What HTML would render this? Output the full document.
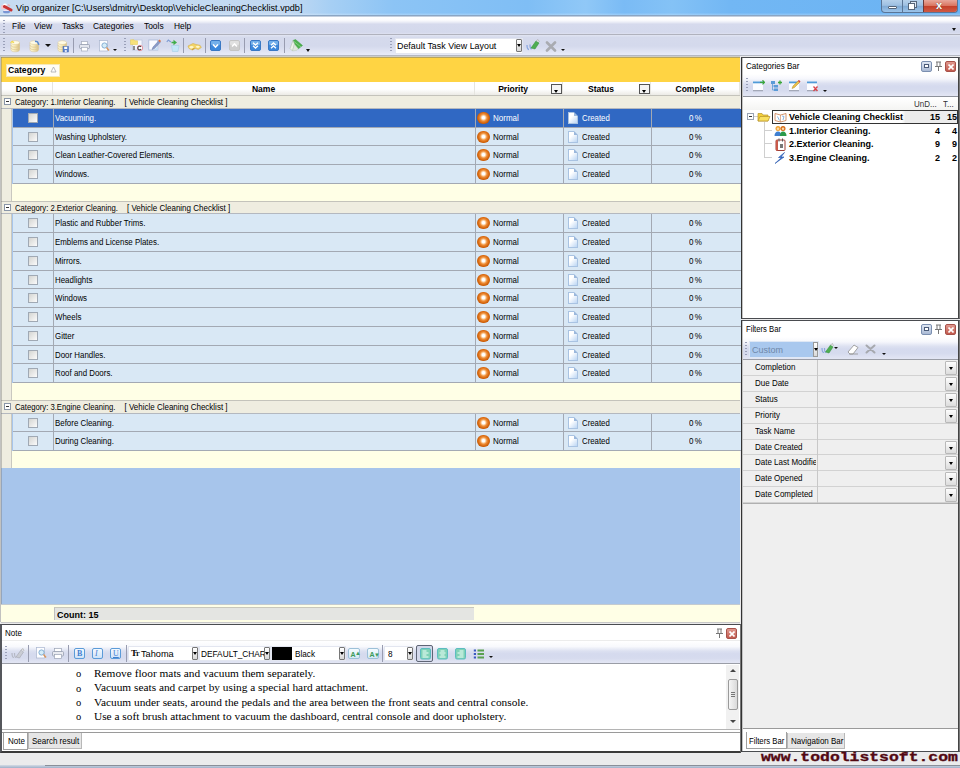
<!DOCTYPE html>
<html><head><meta charset="utf-8"><title>Vip organizer</title>
<style>
*{box-sizing:border-box;margin:0;padding:0}
html,body{width:960px;height:768px;overflow:hidden;background:#ebebec;font-family:"Liberation Sans",sans-serif;font-size:8.3px;color:#000}
.a{position:absolute}
.t{position:absolute;white-space:nowrap;line-height:1}
#title{left:0;top:0;width:960px;height:16px;border-bottom:1px solid #8ba6c4;background:linear-gradient(rgba(255,255,255,0) 0,rgba(255,255,255,0) 85%,rgba(255,255,255,.25) 100%),linear-gradient(90deg,#c6dbf1 0,#c2d9f2 30%,#a6cff4 34.5%,#8cc4f5 41%,#7fbef5 55%,#90c8f7 61%,#7abbf5 65%,#84c2f6 70%,#72b7f4 76%,#6ab3f3 100%)}
#title .t{font-size:9.1px;left:16px;top:3.5px;color:#000}
#menubar{left:0;top:16px;width:960px;height:19px;background:linear-gradient(#fff 0,#fcfcfe 18%,#eceef7 30%,#d6daed 42%,#d4d9ec 90%,#dee1f0 100%);border-bottom:1px solid #b0b2bd;border-top:1px solid #c3cfdf}
#menubar .t{font-size:9px;top:4.6px;transform:scaleX(.933);transform-origin:0 50%}
#toolbar{left:0;top:35px;width:960px;height:21px;background:linear-gradient(#e2e5f2 0,#d5daec 12%,#d4d9ec 55%,#e8ebf8 100%);border-bottom:1px solid #b4b8c2}
.grip{position:absolute;width:2px;background-image:linear-gradient(#9aa0b8 50%,transparent 50%);background-size:2px 3px}
.sep{position:absolute;width:1px;background:#989cb0}
#grid{left:0;top:56px;width:740px;height:566px;background:#a7c5eb;border-left:1px solid #c2c2c0;border-top:1px solid #cfcdc4}
#gpanel{left:1px;top:57px;width:739px;height:25px;background:#ffd443;border-top:1px solid #b9a55c}
#hdr{left:1px;top:82px;width:739px;height:13px;background:linear-gradient(#fff 0,#fff 55%,#ecebe6 100%)}
.hc{position:absolute;top:0;height:13px;border-right:1px solid #e6e5e0;font-weight:bold;font-size:9.2px;text-align:center;line-height:14.5px}
.hs{display:inline-block;transform:scaleX(.93)}
.fb{position:absolute;top:2px;width:11px;height:10px;border:1px solid #555;background:#f4f4f4}
.fb:after{content:"";position:absolute;left:2px;top:4.5px;border:2.5px solid transparent;border-top:3px solid #000;border-bottom:0}
.grow{position:absolute;left:1px;width:739px;height:14px;background:#efede0;border-top:1px solid #c4c3bb;border-bottom:1px solid #b4b8bf;font-size:8px;line-height:13px}
.grow .t{left:13.8px;top:1.5px;font-size:8.95px;transform:scaleX(.86);transform-origin:0 50%}
.pm{position:absolute;left:3px;top:2px;width:7px;height:7px;border:1px solid #8a96a8;background:#fff}
.pm:after{content:"";position:absolute;left:1px;top:2px;width:3px;height:1px;background:#333}
.row{position:absolute;left:12.5px;width:728px;background:#d9e8f5;border-bottom:1px solid #a3a9b3;font-size:9.3px}
.row.sel{background:#3068c3;color:#fff}
.row .c{position:absolute;top:0;bottom:0;border-right:1px solid #a3a9b3}
.row .t{top:5px;transform:scaleX(.86);transform-origin:0 50%}
.foot{position:absolute;left:12px;width:728px;background:#ffffe6}
.ind{position:absolute;left:1px;width:11px;background:#efede0;border-right:1px solid #c9c8c0}
.cb{position:absolute;left:15px;top:3.5px;width:10px;height:10px;border:1px solid #a0a9b4;background:linear-gradient(135deg,#d4d5d2,#fbfbfb);}
.pri{position:absolute;left:1.8px;top:2.8px;width:12.5px;height:12.5px;border-radius:50%;background:radial-gradient(circle at 50% 47%,#fff 0,#fff 14%,#fbd4a8 24%,#ee8f3a 38%,#d9690f 58%,#c05808 72%,#a04806 100%)}
.doc{position:absolute;left:4.5px;top:2.5px;width:10px;height:12px;background:linear-gradient(135deg,#fff 35%,#bcd6f4);border:1px solid #a9c3e2;}
.doc:after{content:"";position:absolute;right:-1px;top:-1px;border:2px solid;border-color:#d9e8f5 #d9e8f5 #9bb8dc #9bb8dc}
.sel .doc:after{border-color:#3068c3 #3068c3 #9bb8dc #9bb8dc}
</style></head><body>
<div id="title" class="a"><span class="t">Vip organizer [C:\Users\dmitry\Desktop\VehicleCleaningChecklist.vpdb]</span></div>
<div id="menubar" class="a">
<div class="grip" style="left:3px;top:3px;height:13px"></div>
<span class="t" style="left:12px">File</span>
<span class="t" style="left:34px">View</span>
<span class="t" style="left:62px">Tasks</span>
<span class="t" style="left:93px">Categories</span>
<span class="t" style="left:144px">Tools</span>
<span class="t" style="left:174px">Help</span>
</div>
<div id="toolbar" class="a"><div class="a" style="left:0;top:-1px">
<div class="grip" style="left:3px;top:4px;height:15px"></div>
<svg class="a" style="left:9px;top:5.5px" width="13" height="13" viewBox="0 0 13 13" ><defs><linearGradient id="dbg" x1="0" x2="1"><stop offset="0" stop-color="#fdf8dc"/><stop offset=".45" stop-color="#f6e9b8"/><stop offset="1" stop-color="#d6bd84"/></linearGradient></defs><path d="M2 2.800v7c0 1.200 1.700 2 4.250 2s4.250-.8 4.250-2v-7z" fill="url(#dbg)" stroke="#d9c48c" stroke-width=".5"/><ellipse cx="6.250" cy="2.600" rx="4.250" ry="1.900" fill="#fffbe6" stroke="#dcc992" stroke-width=".5"/><path d="M2 5.200c0 1.200 1.700 2 4.250 2s4.250-.8 4.250-2M2 7.700c0 1.200 1.700 2 4.250 2s4.250-.8 4.250-2" fill="none" stroke="#dcc58c" stroke-width=".7"/><path d="M1.500 2.500l2-1.500l1.500 2" fill="#f7e26a" stroke="#f0d23a" stroke-width=".8"/></svg>
<svg class="a" style="left:28px;top:5.5px" width="13" height="13" viewBox="0 0 13 13" ><defs><linearGradient id="dbg" x1="0" x2="1"><stop offset="0" stop-color="#fdf8dc"/><stop offset=".45" stop-color="#f6e9b8"/><stop offset="1" stop-color="#d6bd84"/></linearGradient></defs><path d="M2 2.800v7c0 1.200 1.700 2 4.250 2s4.250-.8 4.250-2v-7z" fill="url(#dbg)" stroke="#d9c48c" stroke-width=".5"/><ellipse cx="6.250" cy="2.600" rx="4.250" ry="1.900" fill="#fffbe6" stroke="#dcc992" stroke-width=".5"/><path d="M2 5.200c0 1.200 1.700 2 4.250 2s4.250-.8 4.250-2M2 7.700c0 1.200 1.700 2 4.250 2s4.250-.8 4.250-2" fill="none" stroke="#dcc58c" stroke-width=".7"/><path d="M7 1.300l2.500 .5l1.500 3" fill="none" stroke="#5a8ad0" stroke-width="1.500"/></svg>
<div class="a" style="left:45px;top:10px;width:0;height:0;border-left:3px solid transparent;border-right:3px solid transparent;border-top:3.5px solid #111"></div>
<svg class="a" style="left:56px;top:5.5px" width="13" height="13" viewBox="0 0 13 13" ><defs><linearGradient id="dbg" x1="0" x2="1"><stop offset="0" stop-color="#fdf8dc"/><stop offset=".45" stop-color="#f6e9b8"/><stop offset="1" stop-color="#d6bd84"/></linearGradient></defs><path d="M2 2.800v7c0 1.200 1.700 2 4.250 2s4.250-.8 4.250-2v-7z" fill="url(#dbg)" stroke="#d9c48c" stroke-width=".5"/><ellipse cx="6.250" cy="2.600" rx="4.250" ry="1.900" fill="#fffbe6" stroke="#dcc992" stroke-width=".5"/><path d="M2 5.200c0 1.200 1.700 2 4.250 2s4.250-.8 4.250-2M2 7.700c0 1.200 1.700 2 4.250 2s4.250-.8 4.250-2" fill="none" stroke="#dcc58c" stroke-width=".7"/><rect x="7" y="6.500" width="5.500" height="5.500" fill="#5a80cc" stroke="#3d62aa" stroke-width=".5"/><rect x="8.200" y="6.800" width="3" height="2.200" fill="#fff"/><rect x="8.800" y="10" width="2" height="2" fill="#dfe6f5"/></svg>
<div class="sep" style="left:73px;top:4px;height:15px"></div>
<svg class="a" style="left:79px;top:7px" width="11" height="11" viewBox="0 0 11 11" ><rect x="2.500" y=".5" width="6" height="3.500" fill="#fff" stroke="#a4acbc" stroke-width=".7"/><rect x=".5" y="3.500" width="10" height="4" rx="1" fill="#e3e6ee" stroke="#8d95a8" stroke-width=".7"/><rect x="2.500" y="6.500" width="6" height="3.500" fill="#fff" stroke="#a4acbc" stroke-width=".7"/></svg>
<svg class="a" style="left:97.5px;top:6px" width="12" height="12" viewBox="0 0 12 12" ><rect x="1.500" y=".5" width="8" height="10.500" fill="#fdfdff" stroke="#a9b6cf" stroke-width=".7"/><circle cx="6.500" cy="5.500" r="2.600" fill="#d5ecf8" stroke="#7ba7cf" stroke-width=".9"/><path d="M8.500 7.500l2.500 3" stroke="#d9955a" stroke-width="1.400"/></svg>
<div class="a" style="left:113px;top:15px;width:0;height:0;border-left:2px solid transparent;border-right:2px solid transparent;border-top:2.5px solid #111"></div>
<div class="grip" style="left:124px;top:4px;height:15px"></div>
<svg class="a" style="left:130px;top:5px" width="14" height="13" viewBox="0 0 14 13" ><rect x="2.500" y="1" width="9.500" height="10" fill="#f6f8fd" stroke="#b9c4da" stroke-width=".7"/><path d="M.5 .8h3.500l.8 1h2.700v3.700h-7z" fill="#f7e27a" stroke="#e4c84a" stroke-width=".5"/><circle cx="10" cy="9" r="2.700" fill="#fff" stroke="#e48a96" stroke-width=".9"/><path d="M4 7v4" stroke="#555" stroke-width="1.300"/><path d="M11 7.800a1.800 1.800 0 1 0 0 2.400" fill="none" stroke="#444" stroke-width="1.100"/></svg>
<svg class="a" style="left:148px;top:5px" width="14" height="13" viewBox="0 0 14 13" ><rect x=".8" y="1" width="9" height="10" fill="#fafbff" stroke="#a9b8d6" stroke-width=".8"/><path d="M6 11l3.800 0l0-4z" fill="#c4dcf4"/><path d="M4 10.500l1-2.500l6-6.500l1.500 1.500l-6 6.500z" fill="#8a9cc8" stroke="#6a7aa8" stroke-width=".5"/><path d="M10.300 1.800l1.200-1.300l1.500 1.500l-1.200 1.300z" fill="#e4703a"/></svg>
<svg class="a" style="left:166px;top:5px" width="14" height="14" viewBox="0 0 14 14" ><path d="M5.500 6.500h7.500l-1 6h-5.500z" fill="#c4e6f8" stroke="#a4cfe8" stroke-width=".6"/><path d="M.8 3l1.500-2l2.500 2" fill="none" stroke="#7f9cd4" stroke-width="1.200"/><path d="M7.500 .8l3.500 2.700l-3.500 2.700z" fill="#3fae49"/><path d="M5.500 3.500h3" stroke="#3fae49" stroke-width="1.500"/></svg>
<div class="sep" style="left:183px;top:4px;height:15px"></div>
<svg class="a" style="left:187px;top:8px" width="15" height="9" viewBox="0 0 15 9" ><path d="M1 4l5-2.500l3 1l4 .8l1.300 2.200l-3 2l-3-1l-3 1.500l-3.300-1.500z" fill="#f2d468" stroke="#d4ac48" stroke-width=".6"/><ellipse cx="4.500" cy="5.200" rx="2.200" ry="1.200" fill="#fff6c8"/><ellipse cx="10.800" cy="4.800" rx="1.900" ry="1.100" fill="#fff6c8"/><path d="M5 7.500l2.500-1.200" stroke="#b8862a" stroke-width=".8"/></svg>
<div class="sep" style="left:205px;top:4px;height:15px"></div>
<svg class="a" style="left:210px;top:6px" width="11" height="11" viewBox="0 0 11 11" ><rect x=".5" y=".5" width="10" height="10" rx="1.500" fill="#3c88dc" stroke="#3a78c4"/><rect x="1" y="1" width="9" height="4" rx="1" fill="#9accf4" opacity=".6"/><path d="M3 4.500l2.500 2.500l2.500-2.500" fill="none" stroke="#fff" stroke-width="1.600"/></svg>
<svg class="a" style="left:229px;top:6px" width="11" height="11" viewBox="0 0 11 11" ><rect x=".5" y=".5" width="10" height="10" rx="1.500" fill="#cdcdcd" stroke="#c4c4c4"/><rect x="1" y="1" width="9" height="4" rx="1" fill="#ececec" opacity=".6"/><path d="M3 6.500l2.500-2.500l2.500 2.500" fill="none" stroke="#fff" stroke-width="1.600"/></svg>
<div class="sep" style="left:244px;top:4px;height:15px"></div>
<svg class="a" style="left:250px;top:6px" width="11" height="11" viewBox="0 0 11 11" ><rect x=".5" y=".5" width="10" height="10" rx="1.500" fill="#3c88dc" stroke="#3a78c4"/><rect x="1" y="1" width="9" height="4" rx="1" fill="#9accf4" opacity=".6"/><path d="M3 2.800l2.500 2.300l2.500-2.300M3 5.800l2.500 2.300l2.500-2.300" fill="none" stroke="#fff" stroke-width="1.300"/></svg>
<svg class="a" style="left:268px;top:6px" width="11" height="11" viewBox="0 0 11 11" ><rect x=".5" y=".5" width="10" height="10" rx="1.500" fill="#3c88dc" stroke="#3a78c4"/><rect x="1" y="1" width="9" height="4" rx="1" fill="#9accf4" opacity=".6"/><path d="M3 5.200l2.500-2.300l2.500 2.300M3 8.200l2.500-2.300l2.500 2.300" fill="none" stroke="#fff" stroke-width="1.300"/></svg>
<div class="sep" style="left:284px;top:4px;height:15px"></div>
<svg class="a" style="left:289px;top:5px" width="14" height="14" viewBox="0 0 14 14" ><path d="M4 1.500l2.500-1l7 6l-4.500 3.500l-4-5z" fill="#4cb04c" stroke="#3a9a40" stroke-width=".5"/><path d="M4 1.500l-3 8l2.500 2.500l2-7z" fill="#eef2ea" stroke="#a9b8a6" stroke-width=".5"/><path d="M3.500 12l4.500-.8l1.200-1.400l-3.800-4.800z" fill="#dfe8dc" stroke="#b4c2b0" stroke-width=".4"/><path d="M5 2.500l7 5.500" stroke="#8fd48c" stroke-width=".8"/></svg>
<div class="a" style="left:306px;top:15px;width:0;height:0;border-left:2.5px solid transparent;border-right:2.5px solid transparent;border-top:3px solid #111"></div>
<div class="grip" style="left:390px;top:4px;height:15px"></div>
<div class="a" style="left:395px;top:3.500px;width:128px;height:16px;background:#fff;border:1px solid #e3e6f0"><span class="t" style="left:1px;top:3.500px;font-size:8.900px">Default Task View Layout</span><div class="a" style="right:0;top:0;width:6px;height:13px;background:linear-gradient(#fff,#d8d8d8);border:1px solid #777;border-radius:1px"></div><div class="a" style="right:1px;top:5px;border:2px solid transparent;border-top:3px solid #000;border-bottom:0"></div></div>
<svg class="a" style="left:526px;top:5px" width="15" height="13" viewBox="0 0 15 13" ><path d="M1 6c0 3 1 4.500 2 4.500M4 5.500c0 3 .5 4.500 1.500 4.500" fill="none" stroke="#8aa6e0" stroke-width="1.300"/><path d="M5 9l5-7l3 2l-4 6z" fill="#4fae52" stroke="#2f8c38" stroke-width=".5"/><path d="M10 2l2-1.500l1.500 2.500" fill="#e8e8e8" stroke="#999" stroke-width=".5"/></svg>
<svg class="a" style="left:545px;top:7px" width="12" height="11" viewBox="0 0 12 11" ><path d="M2 1.500l8 8M10 1.500l-8 8" stroke="#a9abb1" stroke-width="2.600" stroke-linecap="round"/></svg>
<div class="a" style="left:561px;top:15px;width:0;height:0;border-left:2px solid transparent;border-right:2px solid transparent;border-top:2.5px solid #111"></div>
<div class="a" style="left:952px;top:-6px;width:0;height:0;border-left:2.5px solid transparent;border-right:2.5px solid transparent;border-top:3px solid #111"></div>
</div></div>
<div id="grid" class="a"></div><div id="gpanel" class="a"></div>
<div id="hdr" class="a">
<div class="hc" style="left:0px;width:52px"><span class="hs">Done</span></div>
<div class="hc" style="left:52px;width:422px"><span class="hs">Name</span></div>
<div class="hc" style="left:474px;width:88px;padding-right:11px"><span class="hs">Priority</span><span class="fb" style="right:0px"></span></div>
<div class="hc" style="left:562px;width:88px;padding-right:11px"><span class="hs">Status</span><span class="fb" style="right:0px"></span></div>
<div class="hc" style="left:650px;width:89px"><span class="hs">Complete</span></div>
</div>
<div class="grow" style="top:95px;height:14px"><span class="pm"></span><span class="t">Category: 1.Interior Cleaning.<span style="margin-left:10.500px;font-size:9.300px">[ Vehicle Cleaning Checklist ]</span></span></div>
<div class="row sel" style="top:109px;height:19px"><div class="c" style="left:0;width:41px"><span class="cb"></span></div><div class="c" style="left:41px;width:422px"><span class="t" style="left:1.500px;font-size:9.200px">Vacuuming.</span></div><div class="c" style="left:463px;width:88px"><span class="pri"></span><span class="t" style="left:17.700px">Normal</span></div><div class="c" style="left:551px;width:88px"><span class="doc"></span><span class="t" style="left:18.500px;font-size:9.100px">Created</span></div><div class="c" style="left:639px;width:89px;border-right:0"><span class="t" style="left:37.500px;word-spacing:-1px">0 %</span></div></div>
<div class="row" style="top:128px;height:18px"><div class="c" style="left:0;width:41px"><span class="cb"></span></div><div class="c" style="left:41px;width:422px"><span class="t" style="left:1.500px;font-size:9.200px">Washing Upholstery.</span></div><div class="c" style="left:463px;width:88px"><span class="pri"></span><span class="t" style="left:17.700px">Normal</span></div><div class="c" style="left:551px;width:88px"><span class="doc"></span><span class="t" style="left:18.500px;font-size:9.100px">Created</span></div><div class="c" style="left:639px;width:89px;border-right:0"><span class="t" style="left:37.500px;word-spacing:-1px">0 %</span></div></div>
<div class="row" style="top:146px;height:19px"><div class="c" style="left:0;width:41px"><span class="cb"></span></div><div class="c" style="left:41px;width:422px"><span class="t" style="left:1.500px;font-size:9.200px">Clean Leather-Covered Elements.</span></div><div class="c" style="left:463px;width:88px"><span class="pri"></span><span class="t" style="left:17.700px">Normal</span></div><div class="c" style="left:551px;width:88px"><span class="doc"></span><span class="t" style="left:18.500px;font-size:9.100px">Created</span></div><div class="c" style="left:639px;width:89px;border-right:0"><span class="t" style="left:37.500px;word-spacing:-1px">0 %</span></div></div>
<div class="row" style="top:165px;height:19px"><div class="c" style="left:0;width:41px"><span class="cb"></span></div><div class="c" style="left:41px;width:422px"><span class="t" style="left:1.500px;font-size:9.200px">Windows.</span></div><div class="c" style="left:463px;width:88px"><span class="pri"></span><span class="t" style="left:17.700px">Normal</span></div><div class="c" style="left:551px;width:88px"><span class="doc"></span><span class="t" style="left:18.500px;font-size:9.100px">Created</span></div><div class="c" style="left:639px;width:89px;border-right:0"><span class="t" style="left:37.500px;word-spacing:-1px">0 %</span></div></div>
<div class="foot" style="top:184px;height:17px"></div>
<div class="ind" style="top:109px;height:92px"></div>
<div class="grow" style="top:201px;height:13px"><span class="pm"></span><span class="t">Category: 2.Exterior Cleaning.<span style="margin-left:10.500px;font-size:9.300px">[ Vehicle Cleaning Checklist ]</span></span></div>
<div class="row" style="top:214px;height:19px"><div class="c" style="left:0;width:41px"><span class="cb"></span></div><div class="c" style="left:41px;width:422px"><span class="t" style="left:1.500px;font-size:9.200px">Plastic and Rubber Trims.</span></div><div class="c" style="left:463px;width:88px"><span class="pri"></span><span class="t" style="left:17.700px">Normal</span></div><div class="c" style="left:551px;width:88px"><span class="doc"></span><span class="t" style="left:18.500px;font-size:9.100px">Created</span></div><div class="c" style="left:639px;width:89px;border-right:0"><span class="t" style="left:37.500px;word-spacing:-1px">0 %</span></div></div>
<div class="row" style="top:233px;height:19px"><div class="c" style="left:0;width:41px"><span class="cb"></span></div><div class="c" style="left:41px;width:422px"><span class="t" style="left:1.500px;font-size:9.200px">Emblems and License Plates.</span></div><div class="c" style="left:463px;width:88px"><span class="pri"></span><span class="t" style="left:17.700px">Normal</span></div><div class="c" style="left:551px;width:88px"><span class="doc"></span><span class="t" style="left:18.500px;font-size:9.100px">Created</span></div><div class="c" style="left:639px;width:89px;border-right:0"><span class="t" style="left:37.500px;word-spacing:-1px">0 %</span></div></div>
<div class="row" style="top:252px;height:19px"><div class="c" style="left:0;width:41px"><span class="cb"></span></div><div class="c" style="left:41px;width:422px"><span class="t" style="left:1.500px;font-size:9.200px">Mirrors.</span></div><div class="c" style="left:463px;width:88px"><span class="pri"></span><span class="t" style="left:17.700px">Normal</span></div><div class="c" style="left:551px;width:88px"><span class="doc"></span><span class="t" style="left:18.500px;font-size:9.100px">Created</span></div><div class="c" style="left:639px;width:89px;border-right:0"><span class="t" style="left:37.500px;word-spacing:-1px">0 %</span></div></div>
<div class="row" style="top:271px;height:18px"><div class="c" style="left:0;width:41px"><span class="cb"></span></div><div class="c" style="left:41px;width:422px"><span class="t" style="left:1.500px;font-size:9.200px">Headlights</span></div><div class="c" style="left:463px;width:88px"><span class="pri"></span><span class="t" style="left:17.700px">Normal</span></div><div class="c" style="left:551px;width:88px"><span class="doc"></span><span class="t" style="left:18.500px;font-size:9.100px">Created</span></div><div class="c" style="left:639px;width:89px;border-right:0"><span class="t" style="left:37.500px;word-spacing:-1px">0 %</span></div></div>
<div class="row" style="top:289px;height:19px"><div class="c" style="left:0;width:41px"><span class="cb"></span></div><div class="c" style="left:41px;width:422px"><span class="t" style="left:1.500px;font-size:9.200px">Windows</span></div><div class="c" style="left:463px;width:88px"><span class="pri"></span><span class="t" style="left:17.700px">Normal</span></div><div class="c" style="left:551px;width:88px"><span class="doc"></span><span class="t" style="left:18.500px;font-size:9.100px">Created</span></div><div class="c" style="left:639px;width:89px;border-right:0"><span class="t" style="left:37.500px;word-spacing:-1px">0 %</span></div></div>
<div class="row" style="top:308px;height:19px"><div class="c" style="left:0;width:41px"><span class="cb"></span></div><div class="c" style="left:41px;width:422px"><span class="t" style="left:1.500px;font-size:9.200px">Wheels</span></div><div class="c" style="left:463px;width:88px"><span class="pri"></span><span class="t" style="left:17.700px">Normal</span></div><div class="c" style="left:551px;width:88px"><span class="doc"></span><span class="t" style="left:18.500px;font-size:9.100px">Created</span></div><div class="c" style="left:639px;width:89px;border-right:0"><span class="t" style="left:37.500px;word-spacing:-1px">0 %</span></div></div>
<div class="row" style="top:327px;height:19px"><div class="c" style="left:0;width:41px"><span class="cb"></span></div><div class="c" style="left:41px;width:422px"><span class="t" style="left:1.500px;font-size:9.200px">Gitter</span></div><div class="c" style="left:463px;width:88px"><span class="pri"></span><span class="t" style="left:17.700px">Normal</span></div><div class="c" style="left:551px;width:88px"><span class="doc"></span><span class="t" style="left:18.500px;font-size:9.100px">Created</span></div><div class="c" style="left:639px;width:89px;border-right:0"><span class="t" style="left:37.500px;word-spacing:-1px">0 %</span></div></div>
<div class="row" style="top:346px;height:18px"><div class="c" style="left:0;width:41px"><span class="cb"></span></div><div class="c" style="left:41px;width:422px"><span class="t" style="left:1.500px;font-size:9.200px">Door Handles.</span></div><div class="c" style="left:463px;width:88px"><span class="pri"></span><span class="t" style="left:17.700px">Normal</span></div><div class="c" style="left:551px;width:88px"><span class="doc"></span><span class="t" style="left:18.500px;font-size:9.100px">Created</span></div><div class="c" style="left:639px;width:89px;border-right:0"><span class="t" style="left:37.500px;word-spacing:-1px">0 %</span></div></div>
<div class="row" style="top:364px;height:19px"><div class="c" style="left:0;width:41px"><span class="cb"></span></div><div class="c" style="left:41px;width:422px"><span class="t" style="left:1.500px;font-size:9.200px">Roof and Doors.</span></div><div class="c" style="left:463px;width:88px"><span class="pri"></span><span class="t" style="left:17.700px">Normal</span></div><div class="c" style="left:551px;width:88px"><span class="doc"></span><span class="t" style="left:18.500px;font-size:9.100px">Created</span></div><div class="c" style="left:639px;width:89px;border-right:0"><span class="t" style="left:37.500px;word-spacing:-1px">0 %</span></div></div>
<div class="foot" style="top:383px;height:17px"></div>
<div class="ind" style="top:214px;height:186px"></div>
<div class="grow" style="top:400px;height:14px"><span class="pm"></span><span class="t">Category: 3.Engine Cleaning.<span style="margin-left:10.500px;font-size:9.300px">[ Vehicle Cleaning Checklist ]</span></span></div>
<div class="row" style="top:414px;height:18px"><div class="c" style="left:0;width:41px"><span class="cb"></span></div><div class="c" style="left:41px;width:422px"><span class="t" style="left:1.500px;font-size:9.200px">Before Cleaning.</span></div><div class="c" style="left:463px;width:88px"><span class="pri"></span><span class="t" style="left:17.700px">Normal</span></div><div class="c" style="left:551px;width:88px"><span class="doc"></span><span class="t" style="left:18.500px;font-size:9.100px">Created</span></div><div class="c" style="left:639px;width:89px;border-right:0"><span class="t" style="left:37.500px;word-spacing:-1px">0 %</span></div></div>
<div class="row" style="top:432px;height:19px"><div class="c" style="left:0;width:41px"><span class="cb"></span></div><div class="c" style="left:41px;width:422px"><span class="t" style="left:1.500px;font-size:9.200px">During Cleaning.</span></div><div class="c" style="left:463px;width:88px"><span class="pri"></span><span class="t" style="left:17.700px">Normal</span></div><div class="c" style="left:551px;width:88px"><span class="doc"></span><span class="t" style="left:18.500px;font-size:9.100px">Created</span></div><div class="c" style="left:639px;width:89px;border-right:0"><span class="t" style="left:37.500px;word-spacing:-1px">0 %</span></div></div>
<div class="foot" style="top:451px;height:17px"></div>
<div class="ind" style="top:414px;height:54px"></div>
<div class="a" style="left:1px;top:57px;width:1px;height:566px;background:rgba(120,120,120,.4)"></div>
<div class="a" style="left:1px;top:604px;width:739px;height:19px;background:#ffffe6;border-top:1px solid #c4cbd0;border-bottom:1px solid #c8c8c8"></div>
<div class="a" style="left:54px;top:607px;width:420px;height:13px;background:#e4e5e2;border-left:1px solid #c0c0c0;border-top:1px solid #c9c8bc"><span class="t" style="left:2px;top:1.500px;font-weight:bold;font-size:9.7px;transform:scaleX(.93);transform-origin:0 50%">Count: 15</span></div>
<svg class="a" style="left:0px;top:2px" width="13" height="12" viewBox="0 0 13 12" ><ellipse cx="6.500" cy="9.800" rx="3.500" ry="1.500" fill="#7a96d4"/><path d="M1 3.500l4-1.500l3 2l-2 3l-4.500 .5z" fill="#f6c4cc"/><ellipse cx="5" cy="2.800" rx="1.800" ry="1.200" fill="#fff"/><path d="M8 2.500l2 1.500" stroke="#eeb0b0" stroke-width="1.500"/><path d="M4.500 4.500l6.500 3.500" stroke="#c83434" stroke-width="3" stroke-linecap="round"/><path d="M3.500 8.500h5" stroke="#f4e4f0" stroke-width="1"/></svg>
<div class="a" style="left:881px;top:0;width:77px;height:13px;border:1px solid #5a7596;border-top:0;border-radius:0 0 4px 4px;background:linear-gradient(#b5d0ea 0,#9ec0e2 45%,#7fa9d4 50%,#9cc4ea 100%);overflow:hidden"><div class="a" style="left:41px;top:0;width:36px;height:13px;background:linear-gradient(#e8a79b 0,#d9745f 45%,#c4402a 50%,#d4604a 100%);border-left:1px solid #6a3a3a"></div><div class="a" style="left:20px;top:0;width:1px;height:13px;background:#5a7596"></div><div class="a" style="left:6px;top:6px;width:9px;height:3px;background:#fff;border:1px solid #55657a;border-radius:1px"></div><div class="a" style="left:28px;top:1px;width:7px;height:7px;border:1px solid #55657a;background:#dfe9f5"></div><div class="a" style="left:26px;top:3px;width:7px;height:7px;border:1.500px solid #55657a;background:#fff"></div><span class="t" style="left:54px;top:0px;font-size:11px;font-weight:bold;color:#fff;text-shadow:0 0 1px #333">x</span></div>
<div class="a" style="left:6px;top:64px;width:54px;height:13px;background:#fffdf5;border:1px solid #f6e9b5"><span class="t" style="left:1px;top:.5px;font-weight:bold;font-size:9.350px;transform:scaleX(.92);transform-origin:0 50%">Category</span><svg class="a" style="left:43px;top:.5px" width="7" height="7" viewBox="0 0 7 7"><path d="M3.500 1l2.500 5h-5z" fill="#fff" stroke="#a9a9a9" stroke-width=".8"/></svg></div>
<div class="a" style="left:741px;top:57px;width:219px;height:262px;background:#fff;border:1px solid #4a4c50;border-left:1px solid #333;border-right:1px solid #7a7a7a;box-shadow:inset -1px 0 0 #444,inset 1px 0 0 #c4c4c4"></div>
<span class="t" style="left:745.500px;top:62.600px;font-size:8.960px;transform:scaleX(.893);transform-origin:0 50%;margin-top:-.5px">Categories Bar</span>
<div class="a" style="left:945px;top:61px;width:11px;height:11px;border:1px solid #a8524a;border-radius:2px;background:linear-gradient(#e0988e,#c25a4e)"><svg class="a" style="left:1.500px;top:1.500px" width="6" height="6" viewBox="0 0 6 6"><path d="M.5 .5l5 5M5.500 .5l-5 5" stroke="#fff" stroke-width="1.600"/></svg></div><svg class="a" style="left:934px;top:61px" width="9" height="11" viewBox="0 0 9 11"><path d="M2 1h5M3 1v4M6 1v4M1 5.500h7M4.500 5.500v4.500" fill="none" stroke="#777" stroke-width="1"/></svg><div class="a" style="left:921px;top:61px;width:11px;height:11px;border:1px solid #7b8fb0;border-radius:2px;background:linear-gradient(#dfe7f3,#a9b9d4)"><div class="a" style="left:2px;top:2px;width:5px;height:4px;border:1px solid #4a5a78;background:#fff"></div></div>
<div class="a" style="left:743px;top:74px;width:215px;height:23px;background:linear-gradient(#fff 0,#f6f7fc 22%,#dde1f1 42%,#d5daee 55%,#d6dbee 75%,#e3e6f4 100%);border-bottom:1px solid #8e929c"></div>
<div class="grip" style="left:746px;top:78px;height:15px"></div>
<svg class="a" style="left:752px;top:80px" width="13" height="12" viewBox="0 0 13 12" ><rect x="1" y="1.500" width="10" height="9" fill="#fbfcff"/><rect x="1" y="1.500" width="10" height="1.800" fill="#4f9ad8"/><rect x="1" y="10" width="10" height="1.300" fill="#a4a9b8"/><path d="M8 2.300h4M10.500 .3l2 2l-2 2" fill="none" stroke="#3aa63a" stroke-width="1.200"/></svg><svg class="a" style="left:770px;top:80px" width="13" height="12" viewBox="0 0 13 12" ><rect x="1" y="1" width="4" height="3" fill="#5b9bd8"/><rect x="4" y="5" width="4" height="2.500" fill="#5b9bd8"/><rect x="4" y="8.500" width="4" height="2.500" fill="#5b9bd8"/><path d="M2.500 4v6h1.500M2.500 6h1.500" fill="none" stroke="#5b9bd8" stroke-width=".8"/><path d="M8 2.500h4M10 .5v4" stroke="#3aa63a" stroke-width="1.300"/></svg><svg class="a" style="left:788px;top:80px" width="13" height="12" viewBox="0 0 13 12" ><rect x="1" y="1.500" width="10" height="9" fill="#fbfcff"/><rect x="1" y="1.500" width="10" height="1.800" fill="#4f9ad8"/><rect x="1" y="10" width="10" height="1.300" fill="#a4a9b8"/><path d="M4 8.500l1-2.500l5.500-5.500l1.500 1.500l-5.500 5.500z" fill="#e9c14a" stroke="#b58a2a" stroke-width=".5"/><path d="M10.500 .5l1.500 1.500" stroke="#d8434a" stroke-width="1.500"/></svg><svg class="a" style="left:806px;top:80px" width="13" height="12" viewBox="0 0 13 12" ><rect x="1" y="1.500" width="10" height="9" fill="#fbfcff"/><rect x="1" y="1.500" width="10" height="1.800" fill="#4f9ad8"/><rect x="1" y="10" width="10" height="1.300" fill="#a4a9b8"/><path d="M7.500 6.500l4 4.500M11.500 6.500l-4 4.500" stroke="#d8434a" stroke-width="1.300"/></svg><div class="a" style="left:823px;top:90px;width:0;height:0;border-left:2.25px solid transparent;border-right:2.25px solid transparent;border-top:2.75px solid #111"></div>
<div class="a" style="left:743px;top:98px;width:215px;height:12px;background:linear-gradient(#fff,#f4f4f2)"></div>
<span class="t" style="left:914px;top:100px;font-size:8.960px;transform:scaleX(.893);transform-origin:0 50%;margin-top:-.5px;color:#333">UnD...</span><span class="t" style="left:943px;top:100px;font-size:8.960px;transform:scaleX(.893);transform-origin:0 50%;margin-top:-.5px;color:#333">T...</span>
<div class="a" style="left:772px;top:110px;width:186px;height:14px;border:1px solid #333;background:linear-gradient(90deg,#fff 0,#fff 70%,#ececec 72%,#ececec 100%)"></div>
<div class="a" style="left:747px;top:113px;width:7px;height:7px;border:1px solid #9aa4b4;background:#fff"><div class="a" style="left:1px;top:2px;width:3px;height:1px;background:#333"></div></div>
<div class="a" style="left:754px;top:116px;width:4px;height:0;border-top:1px solid #cfcfcf"></div>
<div class="a" style="left:764px;top:122px;width:0;height:36px;border-left:1px solid #cfcfcf"></div>
<div class="a" style="left:764px;top:130px;width:8px;height:0;border-top:1px solid #cfcfcf"></div>
<div class="a" style="left:764px;top:143px;width:8px;height:0;border-top:1px solid #cfcfcf"></div>
<div class="a" style="left:764px;top:157px;width:8px;height:0;border-top:1px solid #cfcfcf"></div>
<svg class="a" style="left:757px;top:111px" width="14" height="11" viewBox="0 0 14 11" ><path d="M1 2.500h4l1 1.500h5v6h-10z" fill="#f2cf3c" stroke="#b8942a" stroke-width=".7"/><path d="M1 10l2-4.500h10l-2 4.500z" fill="#f9e060" stroke="#b8942a" stroke-width=".7"/></svg>
<svg class="a" style="left:774px;top:111px" width="13" height="12" viewBox="0 0 13 12" ><path d="M1 2.500l5.500 1.500l5.500-1.500v7l-5.500 1.500l-5.500-1.500z" fill="#fff" stroke="#c97a4a" stroke-width=".8"/><path d="M6.500 4v7" stroke="#c97a4a" stroke-width=".6"/><path d="M3.500 5.500l2 4M8 5l2 .5l-1 3.500" stroke="#6aa0d8" stroke-width=".8" fill="none"/></svg>
<svg class="a" style="left:774px;top:125px" width="13" height="12" viewBox="0 0 13 12" ><circle cx="4" cy="3.500" r="2.500" fill="#f0a030"/><circle cx="9" cy="3.500" r="2.500" fill="#d86a12"/><circle cx="4" cy="3.800" r="1.300" fill="#fbd9a8"/><circle cx="9" cy="3.800" r="1.300" fill="#fbd9a8"/><path d="M.5 11c0-3 1.500-4.500 3.500-4.500s3.500 1.500 3.500 4.500z" fill="#3f7fd0"/><path d="M6 11c0-3 1-4.500 3-4.500s3.500 1.500 3.500 4.500z" fill="#2a9a4a"/></svg>
<svg class="a" style="left:775px;top:138px" width="11" height="13" viewBox="0 0 11 13" ><rect x="1" y="2" width="9" height="10.500" rx="1" fill="#fff" stroke="#a04038" stroke-width="1"/><rect x="1" y="2" width="2" height="10.500" fill="#c95a4a"/><path d="M4 .5v3M7.500 .5v3" stroke="#555" stroke-width="1"/><rect x="5" y="6" width="3" height="4" fill="#777"/></svg>
<svg class="a" style="left:774px;top:152px" width="13" height="12" viewBox="0 0 13 12" ><path d="M10.500 .5l-6 5h3l-6.500 6l9-6.500h-3z" fill="#4a7fd8" stroke="#1f4fa8" stroke-width=".6"/></svg>
<span class="t" style="left:789px;top:112.6px;font-size:9px;font-weight:bold">Vehicle Cleaning Checklist</span>
<span class="t" style="right:20px;top:112.6px;font-size:9px;font-weight:bold">15</span>
<span class="t" style="right:3px;top:112.6px;font-size:9px;font-weight:bold">15</span>
<span class="t" style="left:789px;top:126.6px;font-size:9px;font-weight:bold">1.Interior Cleaning.</span>
<span class="t" style="right:20px;top:126.6px;font-size:9px;font-weight:bold">4</span>
<span class="t" style="right:3px;top:126.6px;font-size:9px;font-weight:bold">4</span>
<span class="t" style="left:789px;top:140px;font-size:9px;font-weight:bold">2.Exterior Cleaning.</span>
<span class="t" style="right:20px;top:140px;font-size:9px;font-weight:bold">9</span>
<span class="t" style="right:3px;top:140px;font-size:9px;font-weight:bold">9</span>
<span class="t" style="left:789px;top:153.7px;font-size:9px;font-weight:bold">3.Engine Cleaning.</span>
<span class="t" style="right:20px;top:153.7px;font-size:9px;font-weight:bold">2</span>
<span class="t" style="right:3px;top:153.7px;font-size:9px;font-weight:bold">2</span>
<div class="a" style="left:741px;top:320px;width:219px;height:432px;background:#efefef;border:1px solid #4a4c50;border-left:1px solid #333;border-right:1px solid #7a7a7a;box-shadow:inset -1px 0 0 #444,inset 1px 0 0 #c4c4c4"></div>
<div class="a" style="left:743px;top:321px;width:215px;height:17px;background:#fff"></div>
<span class="t" style="left:745.500px;top:325.800px;font-size:8.624px;transform:scaleX(.893);transform-origin:0 50%;margin-top:-.5px">Filters Bar</span>
<div class="a" style="left:945px;top:324px;width:11px;height:11px;border:1px solid #a8524a;border-radius:2px;background:linear-gradient(#e0988e,#c25a4e)"><svg class="a" style="left:1.500px;top:1.500px" width="6" height="6" viewBox="0 0 6 6"><path d="M.5 .5l5 5M5.500 .5l-5 5" stroke="#fff" stroke-width="1.600"/></svg></div><svg class="a" style="left:934px;top:324px" width="9" height="11" viewBox="0 0 9 11"><path d="M2 1h5M3 1v4M6 1v4M1 5.500h7M4.500 5.500v4.500" fill="none" stroke="#777" stroke-width="1"/></svg><div class="a" style="left:921px;top:324px;width:11px;height:11px;border:1px solid #7b8fb0;border-radius:2px;background:linear-gradient(#dfe7f3,#a9b9d4)"><div class="a" style="left:2px;top:2px;width:5px;height:4px;border:1px solid #4a5a78;background:#fff"></div></div>
<div class="a" style="left:743px;top:337px;width:215px;height:23px;background:linear-gradient(#fff 0,#f6f7fc 22%,#dde1f1 42%,#d5daee 55%,#d6dbee 75%,#e3e6f4 100%);border-bottom:1px solid #9a9da6"></div>
<div class="grip" style="left:745px;top:342px;height:15px"></div>
<div class="a" style="left:749px;top:341px;width:70px;height:17px;background:#a9c8ee;border:1px solid #dfe8f5"><span class="t" style="left:2px;top:3.500px;font-size:9px;color:#6f87a8">Custom</span><div class="a" style="right:0;top:0;width:5px;height:15px;background:linear-gradient(#fff,#d8d8d8);border:1px solid #999"></div><div class="a" style="right:0px;top:6px;border:2px solid transparent;border-top:3px solid #000;border-bottom:0"></div></div>
<svg class="a" style="left:821px;top:343px" width="13" height="12" viewBox="0 0 13 12" ><path d="M1 5c0 3 1 4.500 2 4.500M3.500 5c0 3 .5 4.500 1.500 4.500" fill="none" stroke="#8aa6e0" stroke-width="1.200"/><path d="M4.500 9l5-7l2.500 2l-4 6z" fill="#4fae52" stroke="#2f8c38" stroke-width=".5"/><path d="M9.500 2l2-1.500l1 2.500" fill="#e8e8e8" stroke="#999" stroke-width=".5"/></svg>
<div class="a" style="left:834px;top:347px;width:0;height:0;border-left:2px solid transparent;border-right:2px solid transparent;border-top:2.5px solid #111"></div>
<svg class="a" style="left:846px;top:344px" width="14" height="11" viewBox="0 0 14 11" ><path d="M2 8l6-7l4 2.500l-5 6.500h-3z" fill="#fff" stroke="#999" stroke-width=".9"/><path d="M3 10h9" stroke="#999" stroke-width=".9"/></svg>
<svg class="a" style="left:865px;top:344px" width="11" height="10" viewBox="0 0 11 10" ><path d="M1.500 1.500l8 7M9.500 1.500l-8 7" stroke="#a6a8ae" stroke-width="2" stroke-linecap="round"/></svg>
<div class="a" style="left:882px;top:353px;width:0;height:0;border-left:2px solid transparent;border-right:2px solid transparent;border-top:2.5px solid #111"></div>
<div class="a" style="left:743px;top:360px;width:215px;height:16px;background:#efefef;border-bottom:1px solid #d2d2d2"></div>
<div class="a" style="left:817px;top:360px;width:1px;height:16px;background:#c8c8c8"></div>
<div class="a" style="left:755px;top:363.2px;width:61px;height:13px;overflow:hidden"><span class="t" style="left:0;top:0;font-size:8.960px;transform:scaleX(.893);transform-origin:0 50%">Completion</span></div>
<div class="a" style="left:945px;top:361px;width:12px;height:14px;background:linear-gradient(#fdfdfd,#dcdcdc);border:1px solid #b9b9b9;border-radius:1px"><div class="a" style="left:2.500px;top:5px;border:2.500px solid transparent;border-top:3px solid #000;border-bottom:0"></div></div>
<div class="a" style="left:743px;top:376px;width:215px;height:16px;background:#efefef;border-bottom:1px solid #d2d2d2"></div>
<div class="a" style="left:817px;top:376px;width:1px;height:16px;background:#c8c8c8"></div>
<div class="a" style="left:755px;top:379.2px;width:61px;height:13px;overflow:hidden"><span class="t" style="left:0;top:0;font-size:8.960px;transform:scaleX(.893);transform-origin:0 50%">Due Date</span></div>
<div class="a" style="left:945px;top:377px;width:12px;height:14px;background:linear-gradient(#fdfdfd,#dcdcdc);border:1px solid #b9b9b9;border-radius:1px"><div class="a" style="left:2.500px;top:5px;border:2.500px solid transparent;border-top:3px solid #000;border-bottom:0"></div></div>
<div class="a" style="left:743px;top:392px;width:215px;height:16px;background:#efefef;border-bottom:1px solid #d2d2d2"></div>
<div class="a" style="left:817px;top:392px;width:1px;height:16px;background:#c8c8c8"></div>
<div class="a" style="left:755px;top:395.2px;width:61px;height:13px;overflow:hidden"><span class="t" style="left:0;top:0;font-size:8.960px;transform:scaleX(.893);transform-origin:0 50%">Status</span></div>
<div class="a" style="left:945px;top:393px;width:12px;height:14px;background:linear-gradient(#fdfdfd,#dcdcdc);border:1px solid #b9b9b9;border-radius:1px"><div class="a" style="left:2.500px;top:5px;border:2.500px solid transparent;border-top:3px solid #000;border-bottom:0"></div></div>
<div class="a" style="left:743px;top:408px;width:215px;height:16px;background:#efefef;border-bottom:1px solid #d2d2d2"></div>
<div class="a" style="left:817px;top:408px;width:1px;height:16px;background:#c8c8c8"></div>
<div class="a" style="left:755px;top:411.2px;width:61px;height:13px;overflow:hidden"><span class="t" style="left:0;top:0;font-size:8.960px;transform:scaleX(.893);transform-origin:0 50%">Priority</span></div>
<div class="a" style="left:945px;top:409px;width:12px;height:14px;background:linear-gradient(#fdfdfd,#dcdcdc);border:1px solid #b9b9b9;border-radius:1px"><div class="a" style="left:2.500px;top:5px;border:2.500px solid transparent;border-top:3px solid #000;border-bottom:0"></div></div>
<div class="a" style="left:743px;top:424px;width:215px;height:16px;background:#efefef;border-bottom:1px solid #d2d2d2"></div>
<div class="a" style="left:817px;top:424px;width:1px;height:16px;background:#c8c8c8"></div>
<div class="a" style="left:755px;top:427.2px;width:61px;height:13px;overflow:hidden"><span class="t" style="left:0;top:0;font-size:8.960px;transform:scaleX(.893);transform-origin:0 50%">Task Name</span></div>
<div class="a" style="left:743px;top:440px;width:215px;height:15px;background:#efefef;border-bottom:1px solid #d2d2d2"></div>
<div class="a" style="left:817px;top:440px;width:1px;height:15px;background:#c8c8c8"></div>
<div class="a" style="left:755px;top:443.2px;width:61px;height:13px;overflow:hidden"><span class="t" style="left:0;top:0;font-size:8.960px;transform:scaleX(.893);transform-origin:0 50%">Date Created</span></div>
<div class="a" style="left:945px;top:441px;width:12px;height:13px;background:linear-gradient(#fdfdfd,#dcdcdc);border:1px solid #b9b9b9;border-radius:1px"><div class="a" style="left:2.500px;top:5px;border:2.500px solid transparent;border-top:3px solid #000;border-bottom:0"></div></div>
<div class="a" style="left:743px;top:455px;width:215px;height:16px;background:#efefef;border-bottom:1px solid #d2d2d2"></div>
<div class="a" style="left:817px;top:455px;width:1px;height:16px;background:#c8c8c8"></div>
<div class="a" style="left:755px;top:458.2px;width:61px;height:13px;overflow:hidden"><span class="t" style="left:0;top:0;font-size:8.960px;transform:scaleX(.893);transform-origin:0 50%">Date Last Modifie</span></div>
<div class="a" style="left:945px;top:456px;width:12px;height:14px;background:linear-gradient(#fdfdfd,#dcdcdc);border:1px solid #b9b9b9;border-radius:1px"><div class="a" style="left:2.500px;top:5px;border:2.500px solid transparent;border-top:3px solid #000;border-bottom:0"></div></div>
<div class="a" style="left:743px;top:471px;width:215px;height:16px;background:#efefef;border-bottom:1px solid #d2d2d2"></div>
<div class="a" style="left:817px;top:471px;width:1px;height:16px;background:#c8c8c8"></div>
<div class="a" style="left:755px;top:474.2px;width:61px;height:13px;overflow:hidden"><span class="t" style="left:0;top:0;font-size:8.960px;transform:scaleX(.893);transform-origin:0 50%">Date Opened</span></div>
<div class="a" style="left:945px;top:472px;width:12px;height:14px;background:linear-gradient(#fdfdfd,#dcdcdc);border:1px solid #b9b9b9;border-radius:1px"><div class="a" style="left:2.500px;top:5px;border:2.500px solid transparent;border-top:3px solid #000;border-bottom:0"></div></div>
<div class="a" style="left:743px;top:487px;width:215px;height:16px;background:#efefef;border-bottom:1px solid #d2d2d2"></div>
<div class="a" style="left:817px;top:487px;width:1px;height:16px;background:#c8c8c8"></div>
<div class="a" style="left:755px;top:490.2px;width:61px;height:13px;overflow:hidden"><span class="t" style="left:0;top:0;font-size:8.960px;transform:scaleX(.893);transform-origin:0 50%">Date Completed</span></div>
<div class="a" style="left:945px;top:488px;width:12px;height:14px;background:linear-gradient(#fdfdfd,#dcdcdc);border:1px solid #b9b9b9;border-radius:1px"><div class="a" style="left:2.500px;top:5px;border:2.500px solid transparent;border-top:3px solid #000;border-bottom:0"></div></div>
<div class="a" style="left:743px;top:503px;width:215px;height:1px;background:#b0b0b0"></div>
<div class="a" style="left:743px;top:728px;width:215px;height:23px;background:#fff;border-top:1px solid #9a9a9a"></div>
<div class="a" style="left:746px;top:732px;width:41px;height:17px;background:#fff;border:1px solid #a0a0a0;border-top:0"><span class="t" style="left:1.500px;top:5px;font-size:8.700px;transform:scaleX(.893);transform-origin:0 50%;margin-top:-.5px">Filters Bar</span></div>
<div class="a" style="left:787px;top:733px;width:58px;height:16px;background:#e6e6e6;border:1px solid #b8b8b8;border-top:0"><span class="t" style="left:3px;top:4px;font-size:8.960px;transform:scaleX(.893);transform-origin:0 50%;margin-top:-.5px">Navigation Bar</span></div>
<div class="a" style="left:0;top:624px;width:741px;height:129px;background:#fff;border:1px solid #4a4c50;border-left:2px solid #55575c;border-right:1px solid #777;border-bottom:2px solid #3a3a3a"></div>
<span class="t" style="left:5px;top:629px;font-size:8.960px;transform:scaleX(.893);transform-origin:0 50%;margin-top:-.5px">Note</span>
<div class="a" style="left:726px;top:628px;width:11px;height:11px;border:1px solid #a8524a;border-radius:2px;background:linear-gradient(#e0988e,#c25a4e)"><svg class="a" style="left:1.500px;top:1.500px" width="6" height="6" viewBox="0 0 6 6"><path d="M.5 .5l5 5M5.500 .5l-5 5" stroke="#fff" stroke-width="1.600"/></svg></div><svg class="a" style="left:715px;top:628px" width="9" height="11" viewBox="0 0 9 11"><path d="M2 1h5M3 1v4M6 1v4M1 5.500h7M4.500 5.500v4.500" fill="none" stroke="#777" stroke-width="1"/></svg>
<div class="a" style="left:2px;top:640px;width:738px;height:24px;background:linear-gradient(#fff 0,#f8f9fd 25%,#dde1f1 45%,#d5daee 58%,#d6dbee 78%,#e3e6f4 100%);border-bottom:1px solid #9a9da6;border-top:1px solid #ececec"></div>
<div class="grip" style="left:5px;top:646px;height:15px"></div>
<svg class="a" style="left:11px;top:647px" width="14" height="12" viewBox="0 0 14 12" ><path d="M1 6c0 3 1 4.500 2 4.500M3.500 6c0 3 .5 4.500 1.500 4.500" fill="none" stroke="#b5b8c4" stroke-width="1.200"/><path d="M5 10l5-7l2.500 2l-4 6z" fill="#c9ccd4" stroke="#9a9da6" stroke-width=".5"/><path d="M10 3l2-1.500l1 2.500" fill="#e8e8e8" stroke="#999" stroke-width=".5"/></svg>
<div class="sep" style="left:28px;top:645px;height:17px"></div>
<svg class="a" style="left:35px;top:647px" width="12" height="12" viewBox="0 0 12 12" ><rect x="1.500" y=".5" width="8" height="10.500" fill="#fdfdff" stroke="#a9b6cf" stroke-width=".7"/><circle cx="6.500" cy="5.500" r="2.600" fill="#d5ecf8" stroke="#7ba7cf" stroke-width=".9"/><path d="M8.500 7.500l2.500 3" stroke="#d9955a" stroke-width="1.400"/></svg>
<svg class="a" style="left:52px;top:648px" width="12" height="11" viewBox="0 0 12 11" ><rect x="2.500" y=".5" width="7" height="3.500" fill="#fff" stroke="#9aa3b5" stroke-width=".7"/><rect x=".5" y="3.500" width="11" height="4.500" rx="1" fill="#e8eaf0" stroke="#8d95a8" stroke-width=".7"/><rect x="2.500" y="6.500" width="7" height="4" fill="#fff" stroke="#9aa3b5" stroke-width=".7"/></svg>
<div class="sep" style="left:68px;top:645px;height:17px"></div>
<div class="a" style="left:74px;top:648px;width:11px;height:11px;border:1px solid #5b9bd8;border-radius:2px;background:linear-gradient(#f4f9ff,#cfe2f7)"><span class="t" style="left:2px;top:1px;font-family:'Liberation Serif',serif;font-size:8px;color:#3f7fd0;font-weight:bold">B</span></div>
<div class="a" style="left:92px;top:648px;width:11px;height:11px;border:1px solid #5b9bd8;border-radius:2px;background:linear-gradient(#f4f9ff,#cfe2f7)"><span class="t" style="left:2px;top:1px;font-family:'Liberation Serif',serif;font-size:8px;color:#3f7fd0;font-style:italic">I</span></div>
<div class="a" style="left:110px;top:648px;width:11px;height:11px;border:1px solid #5b9bd8;border-radius:2px;background:linear-gradient(#f4f9ff,#cfe2f7)"><span class="t" style="left:2px;top:1px;font-family:'Liberation Serif',serif;font-size:8px;color:#3f7fd0;text-decoration:underline">U</span></div>
<div class="sep" style="left:126px;top:645px;height:17px"></div>
<div class="a" style="left:128px;top:646px;width:71px;height:15px;background:#fff;border:1px solid #e3e6f0;overflow:hidden"><span class="t" style="left:2px;top:2px;font-family:'Liberation Serif',serif;font-weight:bold;font-size:9px">T<span style="font-size:7px;margin-left:-2px">T</span></span><span class="t" style="left:12px;top:2.500px;font-size:9.200px">Tahoma</span><div class="a" style="right:0;top:0;width:6px;height:13px;background:linear-gradient(#fff,#d8d8d8);border:1px solid #777;border-radius:1px"></div><div class="a" style="right:1px;top:5px;border:2px solid transparent;border-top:3px solid #000;border-bottom:0"></div></div>
<div class="a" style="left:199px;top:646px;width:72px;height:15px;background:#fff;border:1px solid #e3e6f0;overflow:hidden"><span class="t" style="left:1px;top:3px;font-size:9.296px;transform:scaleX(.893);transform-origin:0 50%;margin-top:-.5px">DEFAULT_CHAR</span><div class="a" style="right:0;top:0;width:6px;height:13px;background:linear-gradient(#fff,#d8d8d8);border:1px solid #777;border-radius:1px"></div><div class="a" style="right:1px;top:5px;border:2px solid transparent;border-top:3px solid #000;border-bottom:0"></div></div>
<div class="a" style="left:271px;top:646px;width:75px;height:15px;background:#fff;border:1px solid #e3e6f0;overflow:hidden"><div class="a" style="left:0px;top:0px;width:20px;height:13px;background:#000"></div><span class="t" style="left:23px;top:3px;font-size:9.184px;transform:scaleX(.893);transform-origin:0 50%;margin-top:-.5px">Black</span><div class="a" style="right:0;top:0;width:6px;height:13px;background:linear-gradient(#fff,#d8d8d8);border:1px solid #777;border-radius:1px"></div><div class="a" style="right:1px;top:5px;border:2px solid transparent;border-top:3px solid #000;border-bottom:0"></div></div>
<div class="a" style="left:348px;top:648px;width:12px;height:11px;border:1px solid #9cc0d8;border-radius:2px;background:linear-gradient(#f4fbff,#d3e8f3)"><span class="t" style="left:1.500px;top:2px;font-size:7px;font-weight:bold;color:#3a9a5a">A</span><span class="t" style="left:6px;top:1px;font-size:6px;color:#3a9a5a">▲</span></div><div class="a" style="left:367px;top:648px;width:12px;height:11px;border:1px solid #9cc0d8;border-radius:2px;background:linear-gradient(#f4fbff,#d3e8f3)"><span class="t" style="left:1.500px;top:2px;font-size:7px;font-weight:bold;color:#3a9a5a">A</span><span class="t" style="left:6px;top:3px;font-size:6px;color:#3a9a5a">▼</span></div>
<div class="sep" style="left:382px;top:645px;height:17px"></div>
<div class="a" style="left:384px;top:646px;width:30px;height:15px;background:#fff;border:1px solid #e3e6f0;overflow:hidden"><span class="t" style="left:3px;top:3px;font-size:9.184px;transform:scaleX(.893);transform-origin:0 50%;margin-top:-.5px">8</span><div class="a" style="right:0;top:0;width:6px;height:13px;background:linear-gradient(#fff,#d8d8d8);border:1px solid #777;border-radius:1px"></div><div class="a" style="right:1px;top:5px;border:2px solid transparent;border-top:3px solid #000;border-bottom:0"></div></div>
<div class="a" style="left:416px;top:645px;width:17px;height:17px;border:1px solid #5f6575;border-radius:2px;background:#d3d8ea"></div><svg class="a" style="left:420px;top:648px" width="12" height="12" viewBox="0 0 12 12" ><rect x=".5" y=".5" width="10" height="10.500" rx="1.500" fill="#7fd2b6" stroke="#5cbcc0"/><path d="M2.500 3h4M2.500 5h6M2.500 7h4M2.500 9h6" stroke="#f4fffa" stroke-width="1.100"/></svg><svg class="a" style="left:437px;top:648px" width="12" height="12" viewBox="0 0 12 12" ><rect x=".5" y=".5" width="10" height="10.500" rx="1.500" fill="#7fd2b6" stroke="#5cbcc0"/><path d="M3.500 3h4M2.500 5h6M3.500 7h4M2.500 9h6" stroke="#f4fffa" stroke-width="1.100"/></svg><svg class="a" style="left:455px;top:648px" width="12" height="12" viewBox="0 0 12 12" ><rect x=".5" y=".5" width="10" height="10.500" rx="1.500" fill="#7fd2b6" stroke="#5cbcc0"/><path d="M4.500 3h4M2.500 5h6M4.500 7h4M2.500 9h6" stroke="#f4fffa" stroke-width="1.100"/></svg>
<svg class="a" style="left:473px;top:648px" width="12" height="12" viewBox="0 0 12 12" ><path d="M4.500 2.500h6.500M4.500 6h6.500M4.500 9.500h6.500" stroke="#5aa050" stroke-width="1.800"/><path d="M.8 2.500h2.200M.8 6h2.200M.8 9.500h2.200" stroke="#3a58c0" stroke-width="2.200"/></svg>
<div class="a" style="left:489px;top:656px;width:0;height:0;border-left:2px solid transparent;border-right:2px solid transparent;border-top:2.5px solid #111"></div>
<span class="t" style="left:76px;top:669.3px;font-family:'Liberation Serif',serif;font-size:10.500px">o</span><span class="t" style="left:94px;top:668px;font-family:'Liberation Serif',serif;font-size:11.350px">Remove floor mats and vacuum them separately.</span>
<span class="t" style="left:76px;top:683.6px;font-family:'Liberation Serif',serif;font-size:10.500px">o</span><span class="t" style="left:94px;top:682.3px;font-family:'Liberation Serif',serif;font-size:11.350px">Vacuum seats and carpet by using a special hard attachment.</span>
<span class="t" style="left:76px;top:697.9px;font-family:'Liberation Serif',serif;font-size:10.500px">o</span><span class="t" style="left:94px;top:696.6px;font-family:'Liberation Serif',serif;font-size:11.350px">Vacuum under seats, around the pedals and the area between the front seats and central console.</span>
<span class="t" style="left:76px;top:712.2px;font-family:'Liberation Serif',serif;font-size:10.500px">o</span><span class="t" style="left:94px;top:710.9px;font-family:'Liberation Serif',serif;font-size:11.350px">Use a soft brush attachment to vacuum the dashboard, central console and door upholstery.</span>
<div class="a" style="left:726px;top:665px;width:13px;height:64px;background:#f1f1f1"></div>
<div class="a" style="left:728px;top:679px;width:10px;height:31px;border:1px solid #9a9a9a;border-radius:2px;background:linear-gradient(90deg,#f6f6f6,#dadada)"><div class="a" style="left:2px;top:12px;width:4px;height:5px;border-top:1px solid #777;border-bottom:1px solid #777"><div class="a" style="left:0;top:1px;width:4px;height:1px;background:#777"></div></div></div>
<div class="a" style="left:730px;top:669px;border:3px solid transparent;border-bottom:3.500px solid #444;border-top:0"></div>
<div class="a" style="left:730px;top:720px;border:3px solid transparent;border-top:3.500px solid #444;border-bottom:0"></div>
<div class="a" style="left:2px;top:729px;width:738px;height:1px;background:#b4b4b4"></div>
<div class="a" style="left:2px;top:732px;width:738px;height:1px;background:#9a9a9a"></div>
<div class="a" style="left:3px;top:733px;width:25px;height:17px;background:#fff;border:1px solid #a0a0a0;border-top:0"><span class="t" style="left:4px;top:4px;font-size:8.960px;transform:scaleX(.893);transform-origin:0 50%;margin-top:-.5px">Note</span></div>
<div class="a" style="left:28px;top:733px;width:54px;height:16px;background:#e6e6e6;border:1px solid #b8b8b8;border-top:0"><span class="t" style="left:3px;top:4px;font-size:8.960px;transform:scaleX(.893);transform-origin:0 50%;margin-top:-.5px">Search result</span></div>
<div class="a" style="left:0;top:765px;width:960px;height:3px;background:linear-gradient(#d5dbe4,#9db0c9)"></div><div class="a" style="left:45px;top:765px;width:915px;height:1px;background:#8a8f99"></div>
<span class="t" style="left:761px;top:751px;font-family:'Liberation Mono',monospace;font-weight:bold;font-size:13.500px;color:#520812;-webkit-text-stroke:.35px #520812;display:inline-block;transform:scaleX(1.215);transform-origin:0 0">www.todolistsoft.com</span>
</body></html>
